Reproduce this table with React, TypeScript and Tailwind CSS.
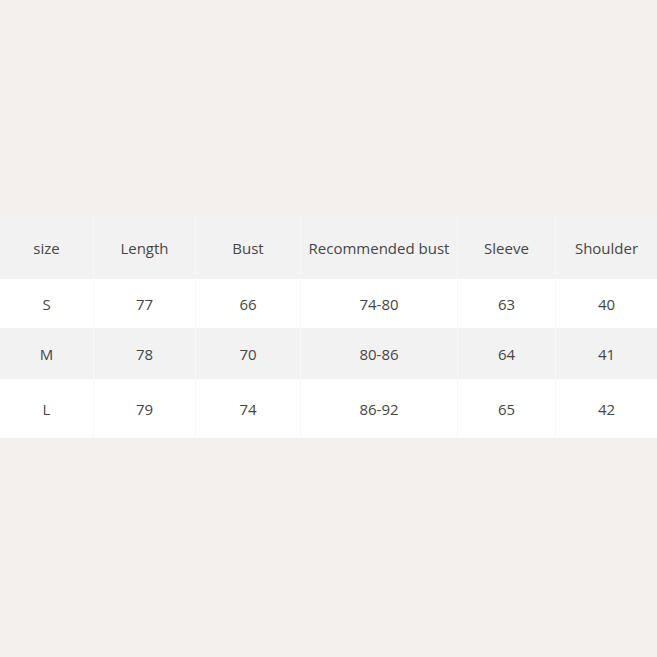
const columns = [
  { label: "size", w: "w-[93px]" },
  { label: "Length", w: "w-[102px]" },
  { label: "Bust", w: "w-[105px]" },
  { label: "Recommended bust", w: "w-[157px]" },
  { label: "Sleeve", w: "w-[98px]" },
  { label: "Shoulder", w: "w-[102px]" },
];

const rows = [
  { cells: ["S", "77", "66", "74-80", "63", "40"], h: "h-[49px]", bg: "bg-white" },
  { cells: ["M", "78", "70", "80-86", "64", "41"], h: "h-[51px]", bg: "bg-[#f2f2f2]" },
  { cells: ["L", "79", "74", "86-92", "65", "42"], h: "h-[59px]", bg: "bg-white" },
];

export default function App() {
  return (
    <div className="w-[657px] h-[657px] bg-[#f4f0ed] flex flex-col justify-start pt-[215px] font-['Open_Sans',sans-serif] text-[15px] text-[#464646]">
      <div className="flex h-[64px] bg-[#f2f2f2]">
        {columns.map((c, i) => (
          <div
            key={c.label}
            className={`${c.w} flex items-center justify-center pt-[3px] ${i > 0 ? "border-l border-[#f7f7f7]" : ""}`}
          >
            {c.label}
          </div>
        ))}
      </div>
      {rows.map((r) => (
        <div key={r.cells[0]} className={`flex ${r.h} ${r.bg}`}>
          {r.cells.map((cell, i) => (
            <div
              key={i}
              className={`${columns[i].w} flex items-center justify-center pt-[1px] ${i > 0 ? "border-l border-[#f8f8f8]" : ""}`}
            >
              {cell}
            </div>
          ))}
        </div>
      ))}
    </div>
  );
}
